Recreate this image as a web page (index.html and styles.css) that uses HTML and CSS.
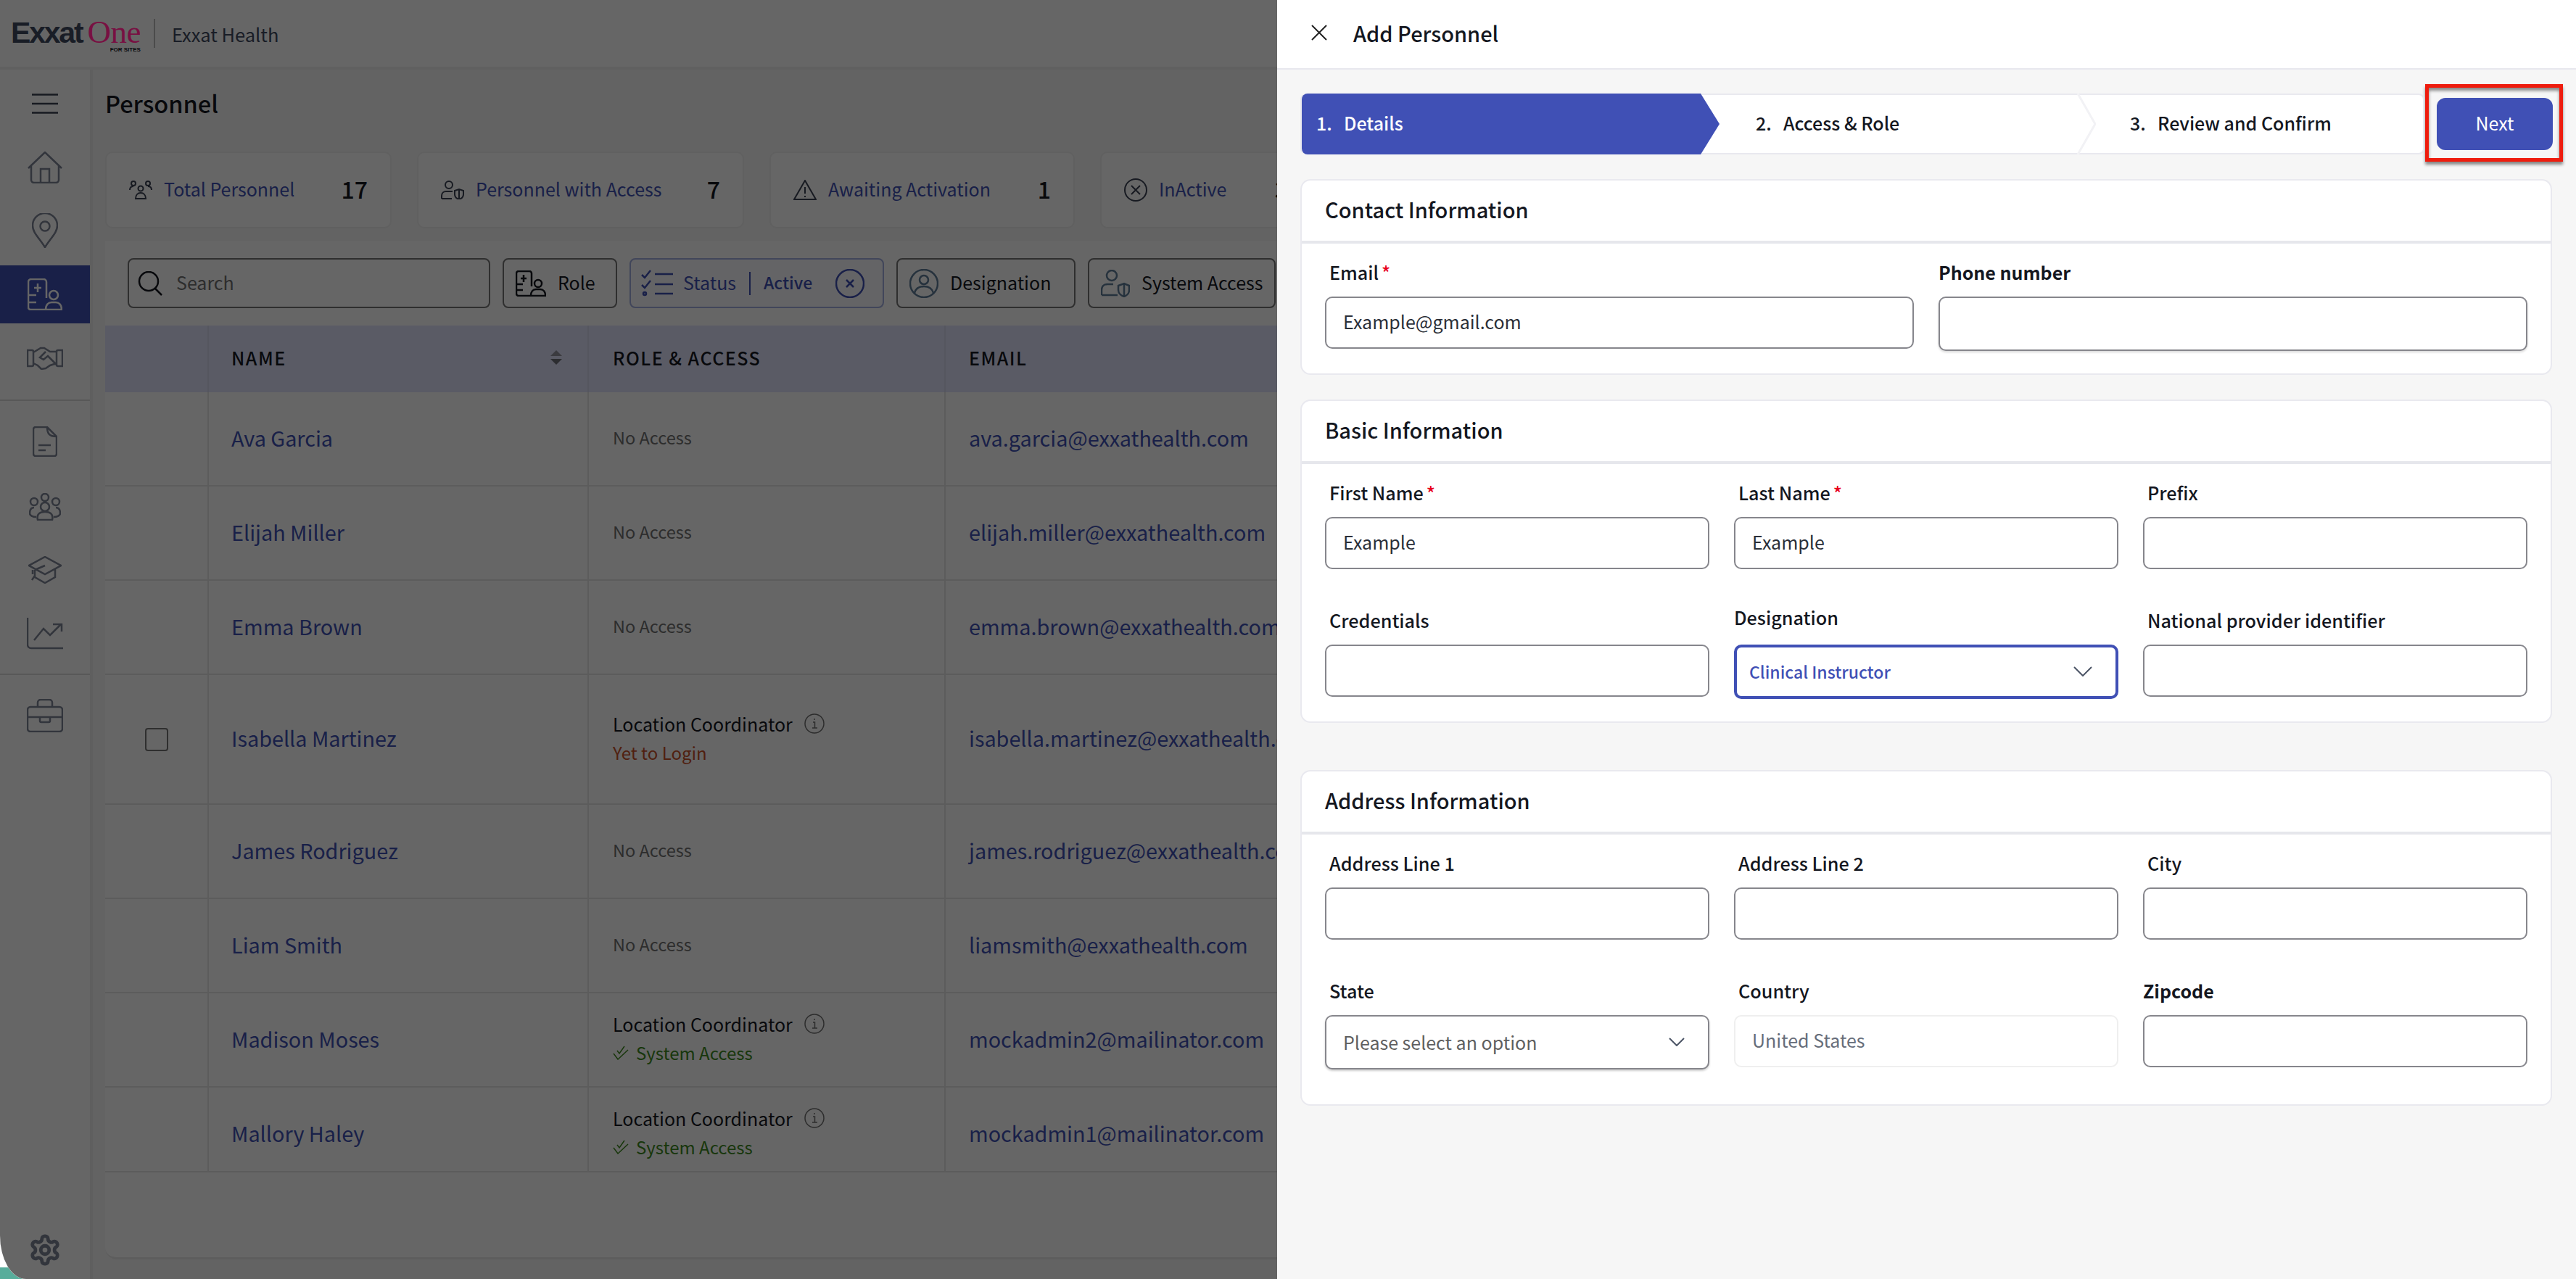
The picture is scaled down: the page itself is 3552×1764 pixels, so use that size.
FILE: index.html
```html
<!DOCTYPE html>
<html lang="en">
<head>
    <meta charset="UTF-8">
    <title>Exxat One - Personnel</title>
    <link rel="stylesheet" href="styles.css">
</head>
<body>
    <div class="app">
        <header class="topbar">
            <div class="logo">
                <span class="logo-exxat">Exxat</span><span class="logo-one">One</span>
                <span class="logo-sub">FOR SITES</span>
            </div>
            <span class="org-name">Exxat Health</span>
        </header>

        <div class="shell">
            <aside class="sidebar">
                <div class="side-item menu">
                    <svg width="36" height="28" viewBox="0 0 36 28"><path d="M0 1.5h36M0 14h36M0 26.5h36"/></svg>
                </div>
                <div class="side-item home">
                    <svg width="48" height="44" viewBox="0 0 48 44"><path d="M1 23 24 1l23 22M5 19v20a4 4 0 0 0 4 4h30a4 4 0 0 0 4-4V19M18 43V24h12v19"/></svg>
                </div>
                <div class="side-item pin">
                    <svg width="36" height="48" viewBox="0 0 36 48"><path d="M18 47C10 34 1 27 1 17a17 17 0 0 1 34 0c0 10-9 17-17 30z"/><circle cx="18" cy="18" r="6.5"/></svg>
                </div>
                <div class="side-item active">
                    <svg width="48" height="44" viewBox="0 0 48 44"><path d="M26 27V5a4 4 0 0 0-4-4H5a4 4 0 0 0-4 4v35a3 3 0 0 0 3 3h22M1 23h11M1 33h11M14 7v12M9 13h10"/><circle cx="36" cy="23" r="6"/><path d="M25 43c0-7 4-10 8-10h6c4 0 8 3 8 10z"/></svg>
                </div>
                <div class="side-item shake">
                    <svg width="50" height="32" viewBox="0 0 50 32"><path d="M1 5h6a2 2 0 0 1 2 2v18a2 2 0 0 1-2 2H1zM49 5h-6a2 2 0 0 0-2 2v18a2 2 0 0 0 2 2h6zM9 8l10-6h5l8 5h9M9 23l6 3 5 5 6-1 6-4 9-3M26 7l-8 8 5 3 6-5 12 12"/></svg>
                </div>
                <div class="side-rule"></div>
                <div class="side-item doc">
                    <svg width="34" height="42" viewBox="0 0 34 42"><path d="M20 1H4a3 3 0 0 0-3 3v34a3 3 0 0 0 3 3h26a3 3 0 0 0 3-3V14zM20 1c0 9 3 13 13 13M8 26h17M8 33h10"/></svg>
                </div>
                <div class="side-item people">
                    <svg width="44" height="38" viewBox="0 0 44 38"><circle cx="22" cy="6" r="5"/><circle cx="7" cy="12" r="5"/><circle cx="37" cy="12" r="5"/><circle cx="22" cy="19" r="6"/><path d="M12 37c-2-9 4-11 10-11s12 2 10 11zM7 20c-5 0-6 4-6 8 0 3 4 5 9 5M37 20c5 0 6 4 6 8 0 3-4 5-9 5"/></svg>
                </div>
                <div class="side-item grad">
                    <svg width="46" height="38" viewBox="0 0 46 38"><path d="M23 1 45 13 23 25 1 13zM9 19v10l14 8 14-8V17M23 13 9 19M9 27l-4 6M6 19v6"/></svg>
                </div>
                <div class="side-item chart">
                    <svg width="50" height="44" viewBox="0 0 50 44"><path d="M1 0v37a5 5 0 0 0 5 5h44M10 31l13-16 9 9 15-15M36 9h12v10"/></svg>
                </div>
                <div class="side-rule second"></div>
                <div class="side-item case">
                    <svg width="50" height="46" viewBox="0 0 50 46"><rect x="1" y="11" width="48" height="34" rx="4"/><path d="M15 11V5a4 4 0 0 1 4-4h12a4 4 0 0 1 4 4v6M1 25h48M18 25v5a2 2 0 0 0 2 2h10a2 2 0 0 0 2-2v-5"/></svg>
                </div>
                <div class="side-item gear">
                    <svg width="46" height="46" viewBox="0 0 24 24"><path d="M12.22 2h-.44a2 2 0 0 0-2 2v.18a2 2 0 0 1-1 1.73l-.43.25a2 2 0 0 1-2 0l-.15-.08a2 2 0 0 0-2.73.73l-.22.38a2 2 0 0 0 .73 2.73l.15.1a2 2 0 0 1 1 1.72v.51a2 2 0 0 1-1 1.74l-.15.09a2 2 0 0 0-.73 2.73l.22.38a2 2 0 0 0 2.73.73l.15-.08a2 2 0 0 1 2 0l.43.25a2 2 0 0 1 1 1.73V20a2 2 0 0 0 2 2h.44a2 2 0 0 0 2-2v-.18a2 2 0 0 1 1-1.73l.43-.25a2 2 0 0 1 2 0l.15.08a2 2 0 0 0 2.73-.73l.22-.39a2 2 0 0 0-.73-2.73l-.15-.08a2 2 0 0 1-1-1.74v-.5a2 2 0 0 1 1-1.74l.15-.09a2 2 0 0 0 .73-2.73l-.22-.38a2 2 0 0 0-2.73-.73l-.15.08a2 2 0 0 1-2 0l-.43-.25a2 2 0 0 1-1-1.73V4a2 2 0 0 0-2-2z"/><circle cx="12" cy="12" r="3"/></svg>
                </div>
            </aside>

            <main class="main">
                <h1 class="page-title">Personnel</h1>

                <div class="stats">
                    <div class="stat stat-total">
                        <svg width="32" height="26" viewBox="0 0 32 26"><circle cx="6" cy="4" r="3"/><circle cx="26" cy="4" r="3"/><circle cx="16" cy="11" r="3.5"/><path d="M1 13c0-3 2-5 5-5M31 13c0-3-2-5-5-5M9 25c0-5 3-8 7-8s7 3 7 8z"/></svg>
                        <span class="stat-label">Total Personnel</span>
                        <span class="stat-num">17</span>
                    </div>
                    <div class="stat stat-access">
                        <svg width="32" height="26" viewBox="0 0 32 26"><circle cx="11" cy="6" r="5"/><path d="M1 25v-4c0-4 3-6 6-6h9M1 25h14M19 14l6-2 6 2v5c0 4-3 6-6 7-3-1-6-3-6-7zM25 12v14"/></svg>
                        <span class="stat-label">Personnel with Access</span>
                        <span class="stat-num">7</span>
                    </div>
                    <div class="stat stat-await">
                        <svg width="32" height="28" viewBox="0 0 32 28"><path d="M16 1 1 27h30zM16 10v9M16 22v2"/></svg>
                        <span class="stat-label">Awaiting Activation</span>
                        <span class="stat-num">1</span>
                    </div>
                    <div class="stat stat-inactive">
                        <svg width="32" height="32" viewBox="0 0 32 32"><circle cx="16" cy="16" r="15"/><path d="M10 10l12 12M22 10 10 22"/></svg>
                        <span class="stat-label">InActive</span>
                        <span class="stat-num">3</span>
                    </div>
                </div>

                <div class="table-card">
                    <div class="toolbar">
                        <div class="search">
                            <svg width="34" height="34" viewBox="0 0 34 34"><circle cx="15" cy="14" r="13"/><path d="M24 24l9 9"/></svg>
                            <span>Search</span>
                        </div>
                        <div class="chip role-chip">
                            <svg width="42" height="36" viewBox="0 0 42 36"><path d="M22 22V4a3 3 0 0 0-3-3H4a3 3 0 0 0-3 3v28a3 3 0 0 0 3 3h18M1 19h9M1 27h9M11 6v10M7 11h8"/><circle cx="31" cy="18" r="5"/><path d="M21 35c0-6 3-9 7-9h6c4 0 7 3 7 9z"/></svg>
                            <span>Role</span>
                        </div>
                        <div class="chip status-chip">
                            <svg width="44" height="38" viewBox="0 0 44 38"><path d="M1 7l4 4 8-10M1 21l4 4 8-10M19 6h25M19 20h25M19 33h25"/><circle cx="5" cy="33" r="2"/></svg>
                            <span class="status-key">Status</span>
                            <span class="status-bar"></span>
                            <span class="status-val">Active</span>
                            <svg class="status-x" width="40" height="40" viewBox="0 0 40 40"><circle cx="20" cy="20" r="19"/><path d="M15 15l10 10M25 15 15 25"/></svg>
                        </div>
                        <div class="chip designation-chip">
                            <svg class="slate" width="40" height="40" viewBox="0 0 40 40"><circle cx="20" cy="20" r="19"/><circle cx="20" cy="15" r="6"/><path d="M7 33c2-7 7-9 13-9s11 2 13 9"/></svg>
                            <span>Designation</span>
                        </div>
                        <div class="chip">
                            <svg class="slate" width="40" height="38" viewBox="0 0 40 38"><circle cx="15" cy="8" r="7"/><path d="M1 35v-7c0-5 3-8 8-8h8M1 35h22M24 22l8-3 7 3v6c0 5-4 8-7 9-3-1-8-4-8-9zM32 19v18"/></svg>
                            <span>System Access</span>
                        </div>
                    </div>

                    <div class="thead">
                        <div class="cell col-check"></div>
                        <div class="cell col-name">
                            <span>NAME</span>
                            <svg class="sort" width="16" height="20" viewBox="0 0 16 20"><path class="up" d="M8 0l8 8H0z"/><path class="down" d="M8 20 0 12h16z"/></svg>
                        </div>
                        <div class="cell col-role">ROLE &amp; ACCESS</div>
                        <div class="cell col-email">EMAIL</div>
                    </div>

                    <div class="row">
                        <div class="cell col-check"></div>
                        <div class="cell col-name person">Ava Garcia</div>
                        <div class="cell col-role no-access">No Access</div>
                        <div class="cell col-email person">ava.garcia@exxathealth.com</div>
                    </div>
                    <div class="row">
                        <div class="cell col-check"></div>
                        <div class="cell col-name person">Elijah Miller</div>
                        <div class="cell col-role no-access">No Access</div>
                        <div class="cell col-email person">elijah.miller@exxathealth.com</div>
                    </div>
                    <div class="row">
                        <div class="cell col-check"></div>
                        <div class="cell col-name person">Emma Brown</div>
                        <div class="cell col-role no-access">No Access</div>
                        <div class="cell col-email person">emma.brown@exxathealth.com</div>
                    </div>
                    <div class="row tall">
                        <div class="cell col-check"><span class="checkbox"></span></div>
                        <div class="cell col-name person">Isabella Martinez</div>
                        <div class="cell col-role stack">
                            <div class="role-line">Location Coordinator
                                <svg width="28" height="28" viewBox="0 0 28 28"><circle cx="14" cy="14" r="13"/><path d="M12 12h2.500v8M11 20h7M14 7v2"/></svg>
                            </div>
                            <div class="login-line">Yet to Login</div>
                        </div>
                        <div class="cell col-email person">isabella.martinez@exxathealth.com</div>
                    </div>
                    <div class="row">
                        <div class="cell col-check"></div>
                        <div class="cell col-name person">James Rodriguez</div>
                        <div class="cell col-role no-access">No Access</div>
                        <div class="cell col-email person">james.rodriguez@exxathealth.com</div>
                    </div>
                    <div class="row">
                        <div class="cell col-check"></div>
                        <div class="cell col-name person">Liam Smith</div>
                        <div class="cell col-role no-access">No Access</div>
                        <div class="cell col-email person">liamsmith@exxathealth.com</div>
                    </div>
                    <div class="row">
                        <div class="cell col-check"></div>
                        <div class="cell col-name person">Madison Moses</div>
                        <div class="cell col-role stack">
                            <div class="role-line">Location Coordinator
                                <svg width="28" height="28" viewBox="0 0 28 28"><circle cx="14" cy="14" r="13"/><path d="M12 12h2.500v8M11 20h7M14 7v2"/></svg>
                            </div>
                            <div class="access-line">
                                <svg width="22" height="20" viewBox="0 0 22 20"><path d="M1 11l6 8L21 6M6 7l3 4 7-10"/></svg>
                                System Access
                            </div>
                        </div>
                        <div class="cell col-email person">mockadmin2@mailinator.com</div>
                    </div>
                    <div class="row short">
                        <div class="cell col-check"></div>
                        <div class="cell col-name person">Mallory Haley</div>
                        <div class="cell col-role stack">
                            <div class="role-line">Location Coordinator
                                <svg width="28" height="28" viewBox="0 0 28 28"><circle cx="14" cy="14" r="13"/><path d="M12 12h2.500v8M11 20h7M14 7v2"/></svg>
                            </div>
                            <div class="access-line">
                                <svg width="22" height="20" viewBox="0 0 22 20"><path d="M1 11l6 8L21 6M6 7l3 4 7-10"/></svg>
                                System Access
                            </div>
                        </div>
                        <div class="cell col-email person">mockadmin1@mailinator.com</div>
                    </div>
                </div>
            </main>
        </div>
    </div>

    <div class="scrim"></div>

    <section class="drawer">
        <div class="drawer-head">
            <svg class="close" width="22" height="22" viewBox="0 0 22 22"><path d="M1 1l20 20M21 1 1 21"/></svg>
            <h2>Add Personnel</h2>
        </div>

        <div class="step-row">
            <div class="stepper">
                <div class="step step-one"><span class="step-no">1.</span>Details</div>
                <div class="step step-two"><span class="step-no">2.</span>Access &amp; Role</div>
                <div class="step step-three"><span class="step-no">3.</span>Review and Confirm</div>
                <svg class="step-arrow" width="26" height="84" viewBox="0 0 26 84"><path d="M1 0l24 42L1 84"/></svg>
            </div>
            <div class="next-box">
                <button class="next-btn">Next</button>
            </div>
        </div>

        <div class="form-card contact">
            <h3>Contact Information</h3>
            <div class="form-grid two">
                <div class="field">
                    <label>Email<span class="req">*</span></label>
                    <div class="input">Example@gmail.com</div>
                </div>
                <div class="field">
                    <label class="strong">Phone number</label>
                    <div class="input phone"></div>
                </div>
            </div>
        </div>

        <div class="form-card basic">
            <h3>Basic Information</h3>
            <div class="form-grid">
                <div class="field">
                    <label>First Name<span class="req">*</span></label>
                    <div class="input">Example</div>
                </div>
                <div class="field">
                    <label>Last Name<span class="req">*</span></label>
                    <div class="input">Example</div>
                </div>
                <div class="field">
                    <label>Prefix</label>
                    <div class="input"></div>
                </div>
                <div class="field">
                    <label>Credentials</label>
                    <div class="input"></div>
                </div>
                <div class="field">
                    <label class="flush">Designation</label>
                    <div class="input select focused">
                        Clinical Instructor
                        <svg width="26" height="14" viewBox="0 0 26 14"><path d="M1 1l12 12L25 1"/></svg>
                    </div>
                </div>
                <div class="field">
                    <label>National provider identifier</label>
                    <div class="input"></div>
                </div>
            </div>
        </div>

        <div class="form-card address">
            <h3>Address Information</h3>
            <div class="form-grid">
                <div class="field">
                    <label>Address Line 1</label>
                    <div class="input"></div>
                </div>
                <div class="field">
                    <label>Address Line 2</label>
                    <div class="input"></div>
                </div>
                <div class="field">
                    <label>City</label>
                    <div class="input"></div>
                </div>
                <div class="field">
                    <label>State</label>
                    <div class="input select placeholder">
                        Please select an option
                        <svg width="22" height="12" viewBox="0 0 22 12"><path d="M1 1l10 10L21 1"/></svg>
                    </div>
                </div>
                <div class="field">
                    <label>Country</label>
                    <div class="input disabled">United States</div>
                </div>
                <div class="field">
                    <label class="strong">Zipcode</label>
                    <div class="input"></div>
                </div>
            </div>
        </div>
    </section>
</body>
</html>
```

FILE: styles.css
```css
* {
    margin: 0;
    padding: 0;
    box-sizing: border-box;
    font-family: "Noto Sans CJK SC", "Noto Sans", sans-serif;
}

html, body {
    height: 100%;
    overflow: hidden;
}

body {
    position: relative;
    background: linear-gradient(#fff 1748px, #57ad9b 1748px);
    color: #14171f;
}

svg {
    fill: none;
    stroke: currentColor;
    stroke-width: 2.5;
    flex-shrink: 0;
}

.app {
    height: 100%;
    background-color: #fff;
    border-bottom-left-radius: 36px 60px;
    overflow: hidden;
}

/* top bar */
.topbar {
    display: flex;
    align-items: center;
    height: 96px;
    padding-left: 15px;
    background-color: #fff;
    border-bottom: 4px solid #f0f0f0;
}

.logo {
    position: relative;
    display: flex;
    align-items: baseline;
    height: 40px;
    padding-right: 18px;
    margin-right: 23px;
    border-right: 2px solid #bbb;
    line-height: 36px;
}

.logo-exxat {
    font-family: "Liberation Sans", sans-serif;
    font-weight: 700;
    font-size: 41px;
    letter-spacing: -2.2px;
    color: #404a60;
}

.logo-one {
    position: relative;
    z-index: 2;
    margin-left: 7px;
    font-family: "Liberation Serif", serif;
    font-size: 45px;
    letter-spacing: -0.5px;
    color: #781042;
}

.logo-sub {
    position: absolute;
    right: 18px;
    bottom: -7px;
    font-family: "Liberation Sans", sans-serif;
    font-weight: 700;
    font-size: 8px;
    line-height: 8px;
    color: #14171f;
}

.org-name {
    font-size: 25.5px;
    color: #404a60;
}

.shell {
    display: flex;
    height: calc(100% - 96px);
    background-color: #f8f8f8;
}

/* left nav */
.sidebar {
    position: relative;
    width: 128px;
    flex-shrink: 0;
    background-color: #fff;
    border-right: 4px solid #eee;
    color: #7d8496;
}

.side-item {
    display: flex;
    justify-content: center;
    align-items: center;
}

.menu { height: 27px; margin-top: 33px; color: #3b4254; }
.home { height: 44px; margin-top: 53px; }
.pin { height: 48px; margin-top: 41px; }
.active { height: 80px; margin-top: 24px; background-color: #4050b5; color: #fff; }
.shake { height: 32px; margin-top: 32px; }
.side-rule { height: 2px; margin-top: 41px; background-color: #ddd; }
.doc { height: 42px; margin-top: 35px; }
.people { height: 38px; margin-top: 50px; }
.grad { height: 38px; margin-top: 49px; }
.chart { height: 44px; margin-top: 47px; }
.side-rule.second { margin-top: 33px; }
.case { height: 46px; margin-top: 33px; }
.gear { position: absolute; left: 0; right: 0; bottom: 17px; height: 46px; }

/* main content */
.main {
    flex: 1;
    min-width: 0;
    padding: 0 0 0 17px;
}

.page-title {
    height: 113px;
    padding-top: 24px;
    font-size: 32.5px;
    line-height: 44px;
    font-weight: 500;
}

.stats {
    display: flex;
    gap: 35px;
}

.stat {
    display: flex;
    align-items: center;
    flex-shrink: 0;
    height: 106px;
    padding: 0 31px 0 31px;
    background-color: #fff;
    border: 2px solid #efefef;
    border-radius: 10px;
    color: #3b4254;
}

.stat-total { width: 395px; }
.stat-access { width: 451px; }
.stat-await { width: 421px; }
.stat-inactive { width: 292px; }

.stat svg {
    margin-right: 16px;
    stroke-width: 2;
}

.stat-label {
    padding-bottom: 4px;
    font-size: 25px;
    color: #4050b5;
    white-space: nowrap;
}

.stat-num {
    margin-left: auto;
    padding-bottom: 4px;
    font-size: 32px;
    font-weight: 500;
    color: #14171f;
}

.table-card {
    margin-top: 17px;
    height: 1405px;
    background-color: #fff;
    border-bottom: 3px solid #e8e8e8;
    border-radius: 0 0 0 16px;
    overflow: hidden;
}

.toolbar {
    display: flex;
    gap: 17px;
    height: 117px;
    padding: 24px 0 0 31px;
    white-space: nowrap;
}

.search, .chip {
    display: flex;
    align-items: center;
    flex-shrink: 0;
    height: 69px;
    background-color: #fff;
    border: 2px solid #777;
    border-radius: 8px;
    font-size: 25px;
}

.search span, .chip span {
    padding-bottom: 3px;
}

.search {
    width: 500px;
    padding-left: 12px;
    color: #707070;
}

.search svg {
    margin-right: 19px;
    color: #14171f;
}

.chip {
    padding: 0 16px;
}

.chip svg {
    margin-right: 16px;
}

.role-chip {
    width: 158px;
}

.designation-chip {
    width: 247px;
}

.status-chip {
    width: 351px;
    padding: 0 0 0 14px;
    background-color: #fafaff;
    border-color: #a3aee0;
    color: #4050b5;
}

.status-chip svg {
    margin-right: 14px;
}

.status-bar {
    width: 2px;
    height: 32px;
    margin: 0 18px;
    padding: 0;
    background-color: #4050b5;
}

.status-val {
    font-size: 23px;
    font-weight: 500;
}

.status-chip .status-x {
    margin: 0 0 0 32px;
}

.slate {
    color: #5f7d9a;
}

/* table */
.thead, .row {
    display: flex;
}

.thead {
    height: 92px;
    background-color: #e1e3fd;
    font-size: 25px;
    font-weight: 500;
    letter-spacing: 1.5px;
}

.row {
    height: 130px;
    border-bottom: 2px solid #e6e6e6;
    overflow: hidden;
}

.row.tall { height: 179px; }
.row.short { height: 117px; }

.row.short .cell {
    height: 128px;
}

.cell {
    display: flex;
    align-items: center;
    flex-shrink: 0;
    padding-left: 32px;
    padding-bottom: 4px;
    border-right: 2px solid #e6e6e6;
    white-space: nowrap;
    overflow: hidden;
}

.thead .cell {
    border-right-color: #d4d6ee;
}

.col-check { width: 143px; justify-content: center; padding: 0; }
.col-name { width: 524px; padding-left: 31px; }
.col-role { width: 492px; padding-left: 33px; }
.col-email { width: 500px; border-right: 0; overflow: visible; }

.sort {
    margin-left: auto;
    margin-right: 35px;
    stroke: none;
}

.sort .up { fill: #94959f; }
.sort .down { fill: #6f7079; }

.person {
    font-size: 28.8px;
    color: #4050b5;
}

.no-access {
    font-size: 23.5px;
    color: #707070;
}

.stack {
    flex-direction: column;
    align-items: flex-start;
    justify-content: center;
    font-size: 24px;
    gap: 8px;
}

.role-line, .login-line, .access-line {
    display: flex;
    align-items: center;
    line-height: 32px;
}

.role-line {
    font-size: 25px;
}

.role-line svg {
    margin-left: 16px;
    stroke-width: 1.5;
    color: #707070;
}

.login-line {
    color: #c8502a;
}

.access-line {
    color: #3e8a1e;
}

.access-line svg {
    margin-right: 10px;
    stroke-width: 1.5;
}

.checkbox {
    width: 32px;
    height: 32px;
    border: 2px solid #777;
    border-radius: 4px;
}

/* drawer */
.scrim {
    position: absolute;
    inset: 0;
    z-index: 1;
    background-color: rgba(0, 0, 0, 0.6);
    border-bottom-left-radius: 36px 60px;
}

.drawer {
    position: absolute;
    top: 0;
    right: 0;
    bottom: 0;
    z-index: 3;
    width: 1791px;
    background-color: #f6f6f6;
}

.drawer-head {
    display: flex;
    align-items: center;
    height: 96px;
    padding: 0 0 4px 47px;
    background-color: #fff;
    border-bottom: 2px solid #e8e8ee;
}

.close {
    color: #222;
    stroke-width: 2;
}

.drawer-head h2 {
    margin-left: 36px;
    font-size: 29px;
    font-weight: 500;
}

.step-row {
    display: flex;
    height: 151px;
    padding: 33px 0 0 32px;
}

.stepper {
    position: relative;
    display: flex;
    flex-shrink: 0;
    width: 1550px;
    height: 84px;
    background-color: #fff;
    border: 2px solid #e9e9ef;
    border-radius: 8px;
    font-size: 25px;
    font-weight: 500;
}

.step {
    display: flex;
    align-items: center;
    padding-bottom: 4px;
    white-space: nowrap;
}

.step-no {
    width: 38px;
}

.step-one {
    width: 576px;
    padding-left: 20px;
    margin: -2px 0;
    color: #fff;
    background-color: #4050b5;
    border-radius: 8px 0 0 8px;
    clip-path: polygon(0 0, 550px 0, 100% 50%, 550px 100%, 0 100%);
}

.step-two {
    width: 519px;
    padding-left: 50px;
}

.step-three {
    padding-left: 47px;
}

.step-arrow {
    position: absolute;
    left: 1069px;
    top: -2px;
    color: #f2f2f5;
    stroke-width: 3;
}

.next-box {
    flex-shrink: 0;
    height: 107px;
    width: 190px;
    margin: -13px 0 0 1px;
    padding: 14px 0 0 11px;
    border: 5px solid #ee1c0e;
    box-shadow: 0 4px 4px rgba(0, 0, 0, 0.45), inset 0 4px 4px rgba(0, 0, 0, 0.45);
}

.next-btn {
    display: block;
    width: 160px;
    height: 72px;
    padding-bottom: 4px;
    background-color: #4050b5;
    color: #fff;
    border: none;
    border-radius: 12px;
    font-size: 25px;
}

.form-card {
    margin-left: 32px;
    width: 1726px;
    background-color: #fff;
    border: 2px solid #e9e9ef;
    border-radius: 14px;
}

.form-card h3 {
    height: 87px;
    padding-left: 32px;
    border-bottom: 4px solid #e6e7ec;
    font-size: 29px;
    font-weight: 500;
    line-height: 78px;
}

.contact { height: 270px; }
.basic { height: 446px; margin-top: 34px; }
.address { height: 463px; margin-top: 65px; }

.form-grid {
    display: grid;
    grid-template-columns: repeat(3, 530px);
    column-gap: 34px;
    row-gap: 55px;
    padding: 24px 0 0 32px;
}

.form-grid.two {
    grid-template-columns: repeat(2, 812px);
    column-gap: 34px;
}

.field label {
    display: block;
    height: 49px;
    padding-left: 6px;
    font-size: 25.2px;
    font-weight: 500;
    line-height: 30px;
}

.field label.flush {
    padding-left: 0;
    margin-top: -4px;
    height: 53px;
}

.field label.strong {
    padding-left: 0;
    font-size: 25px;
    font-weight: 700;
}

.req {
    margin-left: 4px;
    color: #e8001c;
}

.input {
    height: 72px;
    padding-left: 23px;
    background-color: #fff;
    border: 2px solid #86868c;
    border-radius: 10px;
    font-size: 25px;
    line-height: 64px;
    color: #2b2f38;
}

.input.phone {
    height: 75px;
    box-shadow: 0 2px 3px rgba(0, 0, 0, 0.15);
}

.select {
    display: flex;
    align-items: center;
    justify-content: space-between;
    padding-right: 32px;
    padding-bottom: 2px;
}

.select svg {
    color: #4c5566;
    stroke-width: 2;
}

.focused {
    height: 75px;
    padding-left: 17px;
    border: 4px solid #4050b5;
    font-size: 23px;
    font-weight: 500;
    color: #4050b5;
}

.placeholder {
    height: 75px;
    color: #5f5f5f;
    box-shadow: 0 2px 3px rgba(0, 0, 0, 0.2);
}

.disabled {
    border-color: #efefef;
    color: #666d7a;
}
```
